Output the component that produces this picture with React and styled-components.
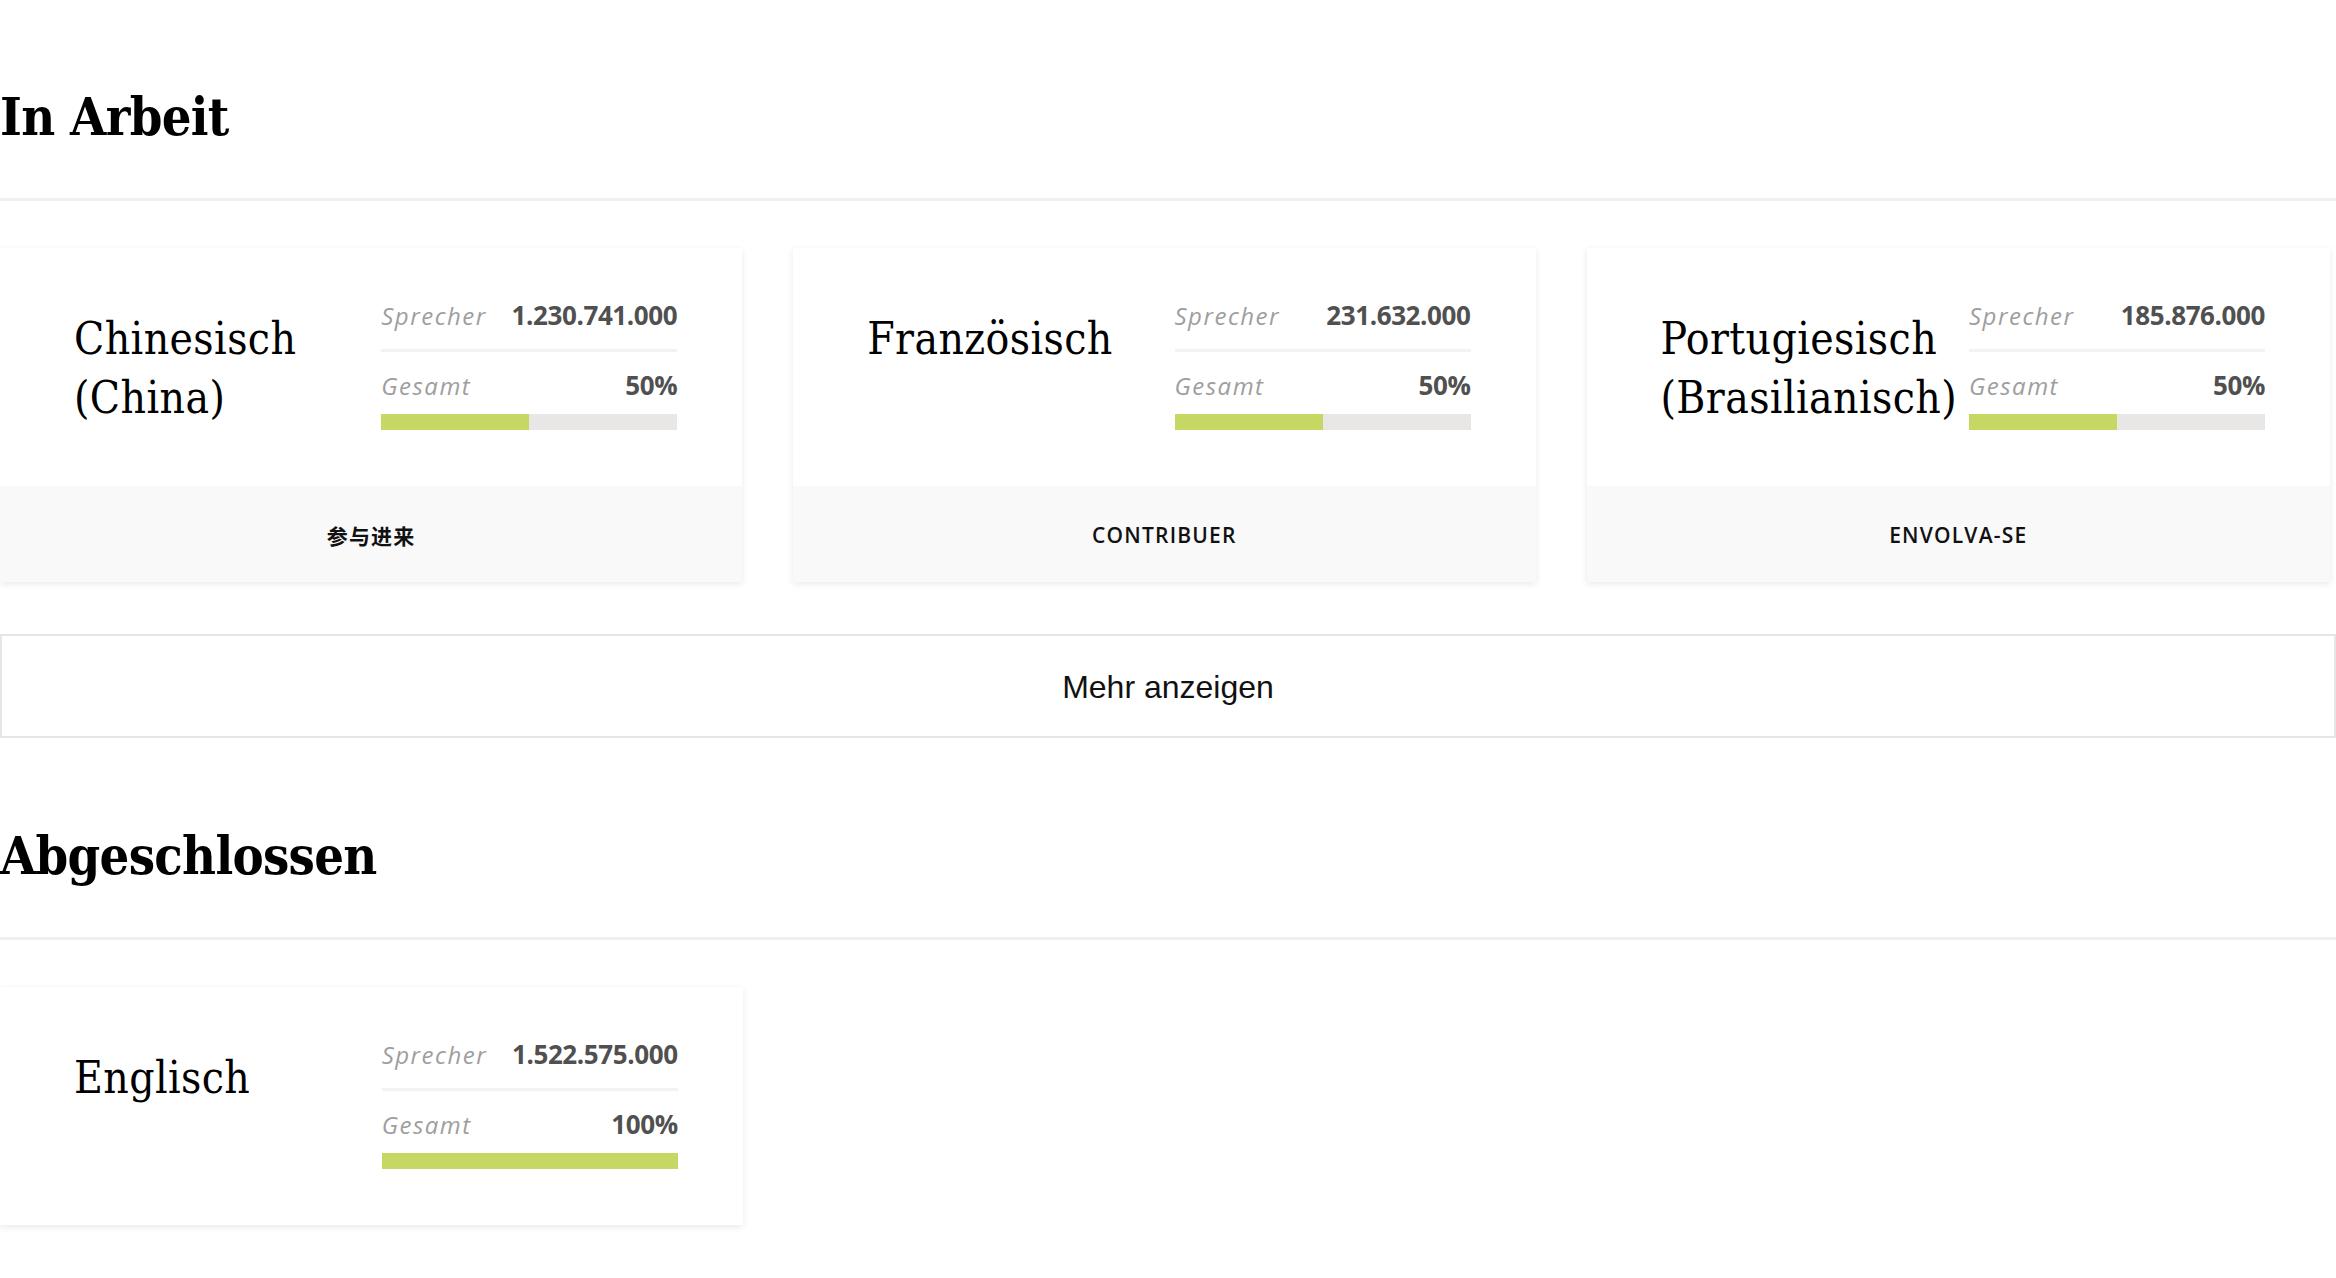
import React from "react";
import styled, { createGlobalStyle } from "styled-components";

const GlobalStyle = createGlobalStyle`
  html, body {
    margin: 0;
    padding: 0;
    background: #ffffff;
  }
  body {
    font-family: "Open Sans", "Noto Sans", sans-serif;
    color: #111;
  }
  * { box-sizing: border-box; }
`;

const Page = styled.main`
  width: 100%;
  padding-bottom: 60px;
`;

const SectionHeader = styled.header`
  padding: ${(p) => (p.$first ? "91px" : "92px")} 0 55px;
  border-bottom: 3px solid #f1f0ee;
`;

const Heading = styled.h2`
  margin: 0;
  font-family: "DejaVu Serif Condensed", "DejaVu Serif", serif;
  font-weight: 700;
  font-size: 52px;
  line-height: 52px;
  color: #000;
  letter-spacing: -0.7px;
`;

const CardGrid = styled.div`
  display: grid;
  grid-template-columns: repeat(3, 1fr);
  column-gap: 51px;
  max-width: 2330px;
  margin-top: 47px;
`;

const Card = styled.article`
  background: #fff;
  box-shadow: 0 2px 7px rgba(0, 0, 0, 0.09);
  display: flex;
  flex-direction: column;
`;

const CardBody = styled.div`
  height: 238px;
  padding: 50px 65px 0 74px;
  display: grid;
  grid-template-columns: 1fr 296px;
  column-gap: 12px;
  align-items: start;
`;

const LangTitle = styled.h3`
  margin: 11px 0 0;
  font-family: "DejaVu Serif Condensed", "DejaVu Serif", serif;
  font-weight: 400;
  font-size: 44px;
  line-height: 59px;
  letter-spacing: 0.4px;
  color: #000;
  white-space: nowrap;
`;

const Stats = styled.div`
  display: flex;
  flex-direction: column;
`;

const StatRow = styled.div`
  display: flex;
  justify-content: space-between;
  align-items: baseline;
  height: 34px;
  ${(p) =>
    p.$divided
      ? `
    box-sizing: content-box;
    padding-bottom: 17px;
    border-bottom: 3px solid #f2f2f2;
  `
      : `margin-top: 16px;`}
`;

const StatLabel = styled.span`
  font-family: "Open Sans", sans-serif;
  font-style: italic;
  font-size: 24px;
  line-height: 34px;
  letter-spacing: 1.5px;
  color: #9e9e9e;
`;

const StatValue = styled.span`
  font-family: "Open Sans", sans-serif;
  font-weight: 700;
  font-size: 26px;
  line-height: 34px;
  letter-spacing: -0.4px;
  color: #505050;
`;

const Track = styled.div`
  margin-top: 12px;
  height: 16px;
  background: #e8e7e5;
`;

const Fill = styled.div`
  height: 100%;
  background: #c7d764;
`;

const CardFooter = styled.a`
  height: 96px;
  padding-top: 2px;
  background: #f9f9f9;
  display: flex;
  align-items: center;
  justify-content: center;
  font-family: "Open Sans", "Noto Sans CJK SC", sans-serif;
  font-weight: 600;
  font-size: 21px;
  letter-spacing: 1.2px;
  text-transform: uppercase;
  color: #111;
  text-decoration: none;
`;

const MoreButton = styled.button`
  display: flex;
  align-items: center;
  justify-content: center;
  width: 100%;
  height: 104px;
  margin-top: 52px;
  padding-top: 3px;
  background: #fff;
  border: 2px solid #e6e6e6;
  font-family: "Liberation Sans", Arial, sans-serif;
  font-size: 32px;
  color: #111;
  cursor: pointer;
`;

const inProgress = [
  {
    name: "Chinesisch (China)",
    speakers: "1.230.741.000",
    progress: 50,
    cta: "参与进来",
  },
  {
    name: "Französisch",
    speakers: "231.632.000",
    progress: 50,
    cta: "Contribuer",
  },
  {
    name: "Portugiesisch (Brasilianisch)",
    speakers: "185.876.000",
    progress: 50,
    cta: "Envolva-se",
  },
];

const done = [
  { name: "Englisch", speakers: "1.522.575.000", progress: 100 },
];

function LanguageCard({ lang }) {
  const lines = lang.name.split(" ");
  return (
    <Card>
      <CardBody>
        <LangTitle>
          {lines.map((l, i) => (
            <React.Fragment key={i}>
              {i > 0 && <br />}
              {l}
            </React.Fragment>
          ))}
        </LangTitle>
        <Stats>
          <StatRow $divided>
            <StatLabel>Sprecher</StatLabel>
            <StatValue>{lang.speakers}</StatValue>
          </StatRow>
          <StatRow>
            <StatLabel>Gesamt</StatLabel>
            <StatValue>{lang.progress}%</StatValue>
          </StatRow>
          <Track>
            <Fill style={{ width: `${lang.progress}%` }} />
          </Track>
        </Stats>
      </CardBody>
      {lang.cta && <CardFooter href="#">{lang.cta}</CardFooter>}
    </Card>
  );
}

export default function App() {
  return (
    <>
      <GlobalStyle />
      <Page>
        <section>
          <SectionHeader $first>
            <Heading>In Arbeit</Heading>
          </SectionHeader>
          <CardGrid>
            {inProgress.map((l) => (
              <LanguageCard key={l.name} lang={l} />
            ))}
          </CardGrid>
          <MoreButton>Mehr anzeigen</MoreButton>
        </section>
        <section>
          <SectionHeader>
            <Heading>Abgeschlossen</Heading>
          </SectionHeader>
          <CardGrid>
            {done.map((l) => (
              <LanguageCard key={l.name} lang={l} />
            ))}
          </CardGrid>
        </section>
      </Page>
    </>
  );
}
